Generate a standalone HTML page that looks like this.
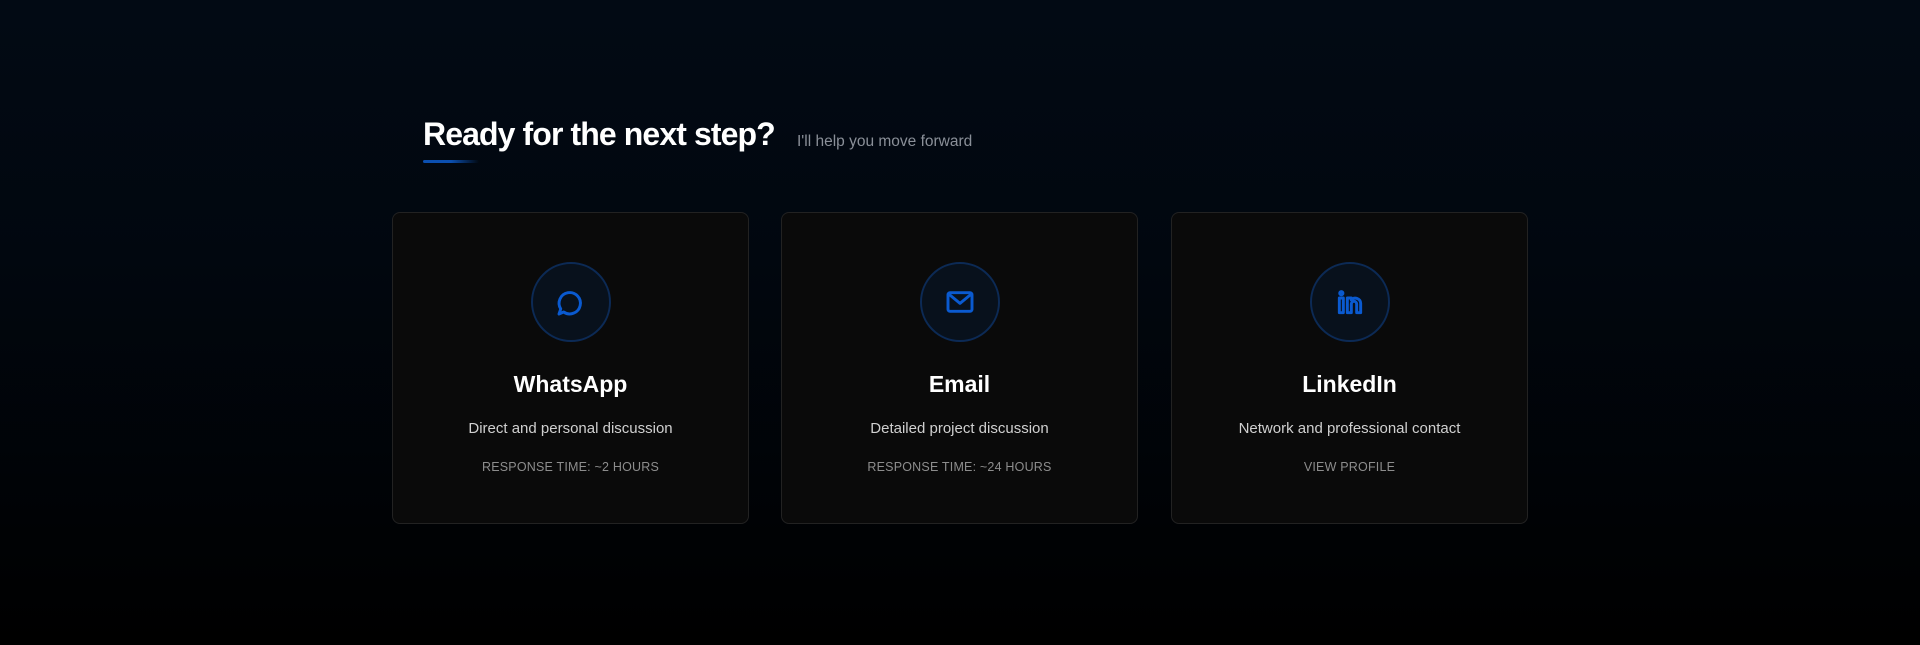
<!DOCTYPE html>
<html><head><style>
*{margin:0;padding:0;box-sizing:border-box}
body{width:1920px;height:645px;overflow:hidden;background:linear-gradient(180deg,#020a14 0%,#01070f 40%,#000 100%);font-family:"Liberation Sans",sans-serif;position:relative}
.h{position:absolute;left:423px;top:116px;color:#fff;font-size:32px;font-weight:700;letter-spacing:-0.9px}
.s{position:absolute;left:797px;top:133px;color:#8a8f98;font-size:15.5px}
.u{position:absolute;left:423px;top:160px;width:56px;height:3px;border-radius:2px;background:linear-gradient(90deg,#0b4fb0,#0b4fb0 50%,rgba(11,79,176,0))}
.c{position:absolute;top:212px;width:357px;height:312px;background:#0a0a0a;border:1px solid #222;border-radius:8px;text-align:center}
.ic{position:absolute;left:138px;top:49px;width:80px;height:80px;border-radius:50%;border:2px solid #0c2a55;background:#08111c;display:flex;align-items:center;justify-content:center}
.t{position:absolute;top:158px;width:100%;color:#fff;font-size:23px;font-weight:700}
.d{position:absolute;top:207px;width:100%;color:#d0d0d0;font-size:15px}
.r{position:absolute;top:247px;width:100%;color:#8d8d8d;font-size:12.5px;letter-spacing:.2px}
svg{width:32px;height:32px;fill:none;stroke:#0a5ad0;stroke-width:2.2;stroke-linecap:round;stroke-linejoin:round}
</style></head><body>
<div class="h">Ready for the next step?</div>
<div class="s">I'll help you move forward</div>
<div class="u"></div>
<div class="c" style="left:392px"><div class="ic"><svg viewBox="0 0 24 24"><path d="M6.5 19.5 3 21l1.3-3.8A8 8 0 1 1 6.5 19.5z"/></svg></div><div class="t">WhatsApp</div><div class="d">Direct and personal discussion</div><div class="r">RESPONSE TIME: ~2 HOURS</div></div>
<div class="c" style="left:781px"><div class="ic"><svg viewBox="0 0 24 24"><rect x="3" y="5" width="18" height="14" rx="1.5"/><path d="M3.5 6l8.5 7 8.5-7"/></svg></div><div class="t">Email</div><div class="d">Detailed project discussion</div><div class="r">RESPONSE TIME: ~24 HOURS</div></div>
<div class="c" style="left:1171px"><div class="ic"><svg viewBox="0 0 24 24"><path d="M4 9h3v11H4zM5.5 4.2a1.2 1.2 0 1 1 0 2.4 1.2 1.2 0 0 1 0-2.4zM10 20V9h3v1.5a4 4 0 0 1 7 2.5V20h-3v-6.5a2 2 0 0 0-4 0V20z"/></svg></div><div class="t">LinkedIn</div><div class="d">Network and professional contact</div><div class="r">VIEW PROFILE</div></div>
</body></html>
